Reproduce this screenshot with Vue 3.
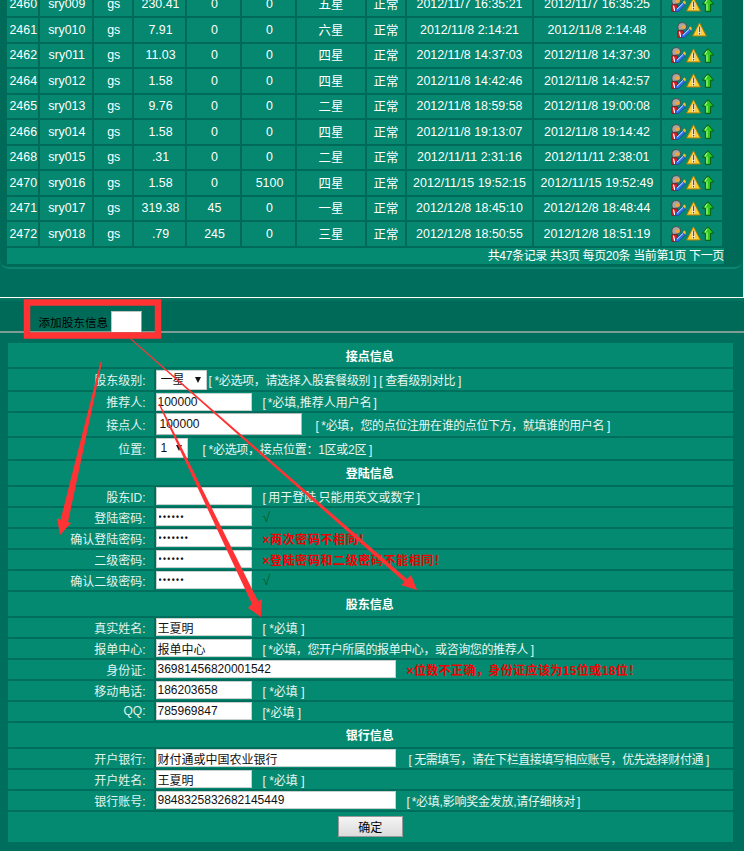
<script setup>
const rows = [
  ['2460','sry009','gs','230.41','0','0','五星','正常','2012/11/7 16:35:21','2012/11/7 16:35:25',true],
  ['2461','sry010','gs','7.91','0','0','六星','正常','2012/11/8 2:14:21','2012/11/8 2:14:48',false],
  ['2462','sry011','gs','11.03','0','0','四星','正常','2012/11/8 14:37:03','2012/11/8 14:37:30',true],
  ['2464','sry012','gs','1.58','0','0','四星','正常','2012/11/8 14:42:46','2012/11/8 14:42:57',true],
  ['2465','sry013','gs','9.76','0','0','二星','正常','2012/11/8 18:59:58','2012/11/8 19:00:08',true],
  ['2466','sry014','gs','1.58','0','0','四星','正常','2012/11/8 19:13:07','2012/11/8 19:14:42',true],
  ['2468','sry015','gs','.31','0','0','二星','正常','2012/11/11 2:31:16','2012/11/11 2:38:01',true],
  ['2470','sry016','gs','1.58','0','5100','四星','正常','2012/11/15 19:52:15','2012/11/15 19:52:49',true],
  ['2471','sry017','gs','319.38','45','0','一星','正常','2012/12/8 18:45:10','2012/12/8 18:48:44',true],
  ['2472','sry018','gs','.79','245','0','三星','正常','2012/12/8 18:50:55','2012/12/8 18:51:19',true],
]
</script>

<template>
  <div class="page">
    <div class="top">
      <div class="panel">
        <div class="table">
          <template v-for="r in rows" :key="r[0]">
            <div v-for="(c, i) in r.slice(0, 10)" :key="i" class="cell" :class="{ nudge: i < 6 }">{{ c }}</div>
            <div class="cell icons">
              <svg class="ic" width="15" height="16" viewBox="0 0 15 16">
                <path d="M.8 5 C.8 2 3 .6 5.4 .6 C7.8 .6 9.4 2 9.4 4.4 C9.4 6.4 8 7.6 6.4 8 L2.4 8.4 C1.4 7.6 .8 6.4 .8 5 Z" fill="#a6a6a6" stroke="#4a4a4a" stroke-width="1"/>
                <path d="M4.4 3.6 H8.6 V6.6 H4.4 Z" fill="#f0a83a"/>
                <path d="M.8 8.8 H6.4 V15.4 H.8 Z" fill="#d8232a" stroke="#7c1015" stroke-width=".7"/>
                <path d="M2.4 9.6 L3.8 15" stroke="#fff" stroke-width="1.2"/>
                <path d="M4.6 13.2 L11.6 6.2 L14.4 8.8 L7.4 15.6 L4.4 15.8 Z" fill="#2f6fe6" stroke="#103a90" stroke-width=".6"/>
                <path d="M6 13.2 L12 7.4" stroke="#dbe8ff" stroke-width="1"/>
                <path d="M11.6 6.2 L13.4 4.4 L14.8 6 L14.4 8.8 Z" fill="#f2c230"/>
              </svg>
              <svg class="ic" width="15" height="15" viewBox="0 0 15 15">
                <path d="M7.5 .8 L14.4 14 H.6 Z" fill="#ffd02a" stroke="#a97c10" stroke-width="1"/>
                <path d="M5.8 5.2 H9.2 L8.8 13 H6.2 Z" fill="#fff3c8"/>
                <rect x="6.9" y="4.8" width="1.3" height="5.4" fill="#7a4a1a"/>
                <rect x="6.9" y="11" width="1.3" height="1.5" fill="#7a4a1a"/>
              </svg>
              <svg v-if="r[10]" class="ic arrow" width="12" height="15" viewBox="0 0 12 15">
                <path d="M6 .6 L11.6 7.2 H8.6 V14.4 H3.4 V7.2 H.4 Z" fill="#2ccb1c" stroke="#0a5a12" stroke-width="1"/>
                <path d="M5 3 L3 6.4 M5 6.5 V13.4" stroke="#b6f59a" stroke-width="1.1"/>
              </svg>
            </div>
          </template>
          <div class="pager">共47条记录 共3页 每页20条 当前第1页 下一页</div>
        </div>
      </div>
    </div>

    <div class="add-bar">
      <span class="add-title">添加股东信息</span>
      <button class="add-btn" type="button"></button>
    </div>

    <div class="form">
      <div class="head">接点信息</div>
      <div class="lab h21">股东级别:</div>
      <div class="val">
        <span class="selwrap sel-w"><select class="sel"><option>一星</option></select></span>
        <span class="note n-rank">[ *必选项&#xFF0C;请选择入股套餐级别 ] [ 查看级别对比 ]</span>
      </div>
      <div class="lab h19">推荐人:</div>
      <div class="val"><input class="inp w96" value="100000"><span class="note n2 tight">[ *必填,推荐人用户名 ]</span></div>
      <div class="lab h22">接点人:</div>
      <div class="val"><input class="inp w146 big" value="100000"><span class="note n-node">[ *必填&#xFF0C;您的点位注册在谁的点位下方&#xFF0C;就填谁的用户名 ]</span></div>
      <div class="lab h21">位置:</div>
      <div class="val">
        <span class="selwrap sel-s"><select class="sel"><option>1</option></select></span>
        <span class="note n-pos">[ *必选项&#xFF0C;接点位置&#xFF1A;1区或2区 ]</span>
      </div>

      <div class="head">登陆信息</div>
      <div class="lab h19">股东ID:</div>
      <div class="val"><input class="inp w96"><span class="note n2 n-id">[ 用于登陆 只能用英文或数字 ]</span></div>
      <div class="lab h19">登陆密码:</div>
      <div class="val"><input class="inp w96 pw" type="password" value="123456"><span class="ok">√</span></div>
      <div class="lab h19">确认登陆密码:</div>
      <div class="val"><input class="inp w96 pw" type="password" value="1234567"><span class="err wide">×两次密码不相同&#xFF01;</span></div>
      <div class="lab h19">二级密码:</div>
      <div class="val"><input class="inp w96 pw" type="password" value="123456"><span class="err wide">×登陆密码和二级密码不能相同&#xFF01;</span></div>
      <div class="lab h19">确认二级密码:</div>
      <div class="val"><input class="inp w96 pw" type="password" value="123456"><span class="ok">√</span></div>

      <div class="head">股东信息</div>
      <div class="lab h19">真实姓名:</div>
      <div class="val"><input class="inp w96" value="王夏明"><span class="note n2">[ *必填 ]</span></div>
      <div class="lab h19">报单中心:</div>
      <div class="val"><input class="inp w96" value="报单中心"><span class="note n2 n-center">[ *必填&#xFF0C;您开户所属的报单中心&#xFF0C;或咨询您的推荐人 ]</span></div>
      <div class="lab h19">身份证:</div>
      <div class="val"><input class="inp w240" value="36981456820001542"><span class="err mid">×位数不正确&#xFF0C;身份证应该为15位或18位&#xFF01;</span></div>
      <div class="lab h19">移动电话:</div>
      <div class="val"><input class="inp w96" value="186203658"><span class="note n2">[ *必填 ]</span></div>
      <div class="lab h19">QQ:</div>
      <div class="val"><input class="inp w96" value="785969847"><span class="note n2">[*必填 ]</span></div>

      <div class="head">银行信息</div>
      <div class="lab h19">开户银行:</div>
      <div class="val"><input class="inp w240" value="财付通或中国农业银行"><span class="note n-bank">[ 无需填写&#xFF0C;请在下栏直接填写相应账号&#xFF0C;优先选择财付通 ]</span></div>
      <div class="lab h19">开户姓名:</div>
      <div class="val"><input class="inp w96" value="王夏明"><span class="note n2">[ *必填 ]</span></div>
      <div class="lab h19">银行账号:</div>
      <div class="val"><input class="inp w240" value="9848325832682145449"><span class="note n-acct">[ *必填,影响奖金发放,请仔细核对 ]</span></div>
      <div class="foot"><button class="ok-btn" type="button">确定</button></div>
    </div>

    <svg class="marks" width="744" height="851" viewBox="0 0 744 851">
      <path d="M100.5 362 L102 362 L68 522 L71 523 L60 535 L57 518 L60.5 520 Z" fill="#ff3333"/>
      <path d="M130 339 L131 338.5 L407 579 L411 575 L417 590 L401 585 L404.5 582 Z" fill="#ff3333"/>
      <path d="M158.5 404 L160 404 L258 601 L262 599 L261 617 L248 608 L252 604 Z" fill="#ff3333"/>
      <rect x="27" y="302.5" width="131" height="33" fill="none" stroke="#ff3333" stroke-width="6.5"/>
    </svg>
  </div>
</template>

<style scoped>
.page {
  position: relative;
  width: 744px;
  height: 851px;
  overflow: hidden;
  background: #006e5c;
  font-family: "Liberation Sans", "Noto Sans CJK SC", sans-serif;
  font-size: 12px;
  color: #fff;
}
.top {
  height: 297.5px;
  box-sizing: border-box;
  border-bottom: 1.5px solid #fff;
  border-right: 1px solid #e8f0ee;
  overflow: hidden;
}
.panel {
  height: 276.5px;
  box-sizing: border-box;
  padding-left: 6.5px;
  border-bottom: 2px solid #0c856e;
  border-radius: 0 0 9px 9px;
  background: #006a58;
}
.table {
  display: grid;
  grid-template-columns: 31.5px 51.5px 38.5px 51px 53px 53px 68px 38px 125px 126px 60px;
  grid-auto-rows: 23.5px;
  column-gap: 2px;
  row-gap: 2px;
  width: 715px;
  margin-top: -7.5px;
}
.cell {
  display: flex;
  align-items: center;
  justify-content: center;
  background: #05886f;
  font-size: 12.4px;
  white-space: nowrap;
}
.nudge {
  padding-left: 2px;
}
.icons {
  font-size: 0;
}
.ic {
  display: block;
  flex: none;
}
.arrow {
  margin-left: 1px;
}
.pager {
  grid-column: 1 / -1;
  height: 16px;
  margin-right: -2px;
  background: #058a72;
  text-align: right;
  font-size: 12px;
  letter-spacing: -.35px;
  line-height: 17px;
  white-space: nowrap;
}
.add-bar {
  box-sizing: border-box;
  height: 35.5px;
  padding: 14px 0 0 38.5px;
  display: flex;
  align-items: flex-start;
  border-bottom: 2px solid #7d9c93;
  background: linear-gradient(#0a7a66, #006a58 4px);
}
.add-title {
  color: #000;
  font-size: 11.6px;
  line-height: 21px;
}
.add-btn {
  box-sizing: border-box;
  width: 31px;
  height: 22px;
  margin: -1px 0 0 2.5px;
  padding: 0;
  background: #fff;
  border: 1px solid #c4c4c4;
  border-right-color: #999;
  border-bottom-color: #999;
}
.form {
  display: grid;
  grid-template-columns: 146px 577.5px;
  column-gap: 2px;
  row-gap: 2px;
  width: 725.5px;
  margin: 10px 0 0 7.5px;
}
.head {
  grid-column: 1 / -1;
  height: 24px;
  padding-right: 1px;
  box-sizing: border-box;
  background: #058a72;
  display: flex;
  align-items: center;
  justify-content: center;
  font-weight: 700;
  font-size: 12px;
}
.lab {
  background: #058a72;
  display: flex;
  align-items: center;
  justify-content: flex-end;
  padding-right: 8px;
  box-sizing: border-box;
  font-size: 12px;
  color: #e2f4ee;
}
.val {
  background: #058a72;
  display: flex;
  align-items: center;
  font-size: 12px;
  color: #e6f6f1;
  white-space: nowrap;
  min-width: 0;
}
.h19 { height: 19px; }
.h21 { height: 21px; }
.h22 { height: 22.5px; }
.inp {
  box-sizing: border-box;
  height: 18px;
  margin: 0;
  padding: 0 0 0 1px;
  background: #fff;
  border: 1px solid #c8d0ce;
  border-radius: 0;
  outline: none;
  color: #111;
  font: 12px "Liberation Sans", "Noto Sans CJK SC", sans-serif;
  flex: none;
}
.pw { font-size: 8.5px; font-weight: 700; letter-spacing: 1.4px; padding-left: 2px; }
.big { height: 22px; padding-left: 3px; border-color: #b0b8b6; }
.w96 { width: 96px; }
.w146 { width: 146px; }
.w240 { width: 240px; }
.selwrap {
  position: relative;
  display: block;
  height: 20px;
  flex: none;
}
.selwrap::after {
  content: "";
  position: absolute;
  top: 7px;
  right: 6px;
  border-left: 3.5px solid transparent;
  border-right: 3.5px solid transparent;
  border-top: 6px solid #111;
}
.sel {
  appearance: none;
  -webkit-appearance: none;
  display: block;
  box-sizing: border-box;
  width: 100%;
  height: 20px;
  padding: 0 0 0 4px;
  margin: 0;
  background: #fff;
  border: 1px solid #c8d0ce;
  border-radius: 0;
  color: #111;
  font: 12px "Liberation Sans", "Noto Sans CJK SC", sans-serif;
}
.sel-w { width: 51px; }
.sel-s { width: 32px; }
.note { display: inline-block; }
.n2 { margin-left: 11px; }
.tight { word-spacing: -1.5px; }
.n-rank { margin-left: 2px; letter-spacing: -.35px; }
.n-node { margin-left: 14px; letter-spacing: -.4px; }
.n-pos { margin-left: 15px; letter-spacing: -.3px; }
.n-id { word-spacing: -1px; }
.n-center { letter-spacing: -.4px; }
.n-bank { margin-left: 13px; letter-spacing: -.45px; }
.n-acct { margin-left: 11px; letter-spacing: -.25px; word-spacing: -1px; }
.ok {
  margin-left: 11px;
  color: #00602c;
  font-size: 14px;
}
.err {
  margin-left: 11px;
  color: #f00000;
  font-weight: 700;
  font-size: 12px;
}
.wide { letter-spacing: .6px; }
.mid { letter-spacing: .4px; }
.foot {
  grid-column: 1 / -1;
  height: 30px;
  background: #058a72;
  display: flex;
  align-items: center;
  justify-content: center;
}
.ok-btn {
  box-sizing: border-box;
  width: 65px;
  height: 21px;
  padding: 0;
  background: linear-gradient(#f4f4f4, #dcdcdc);
  border: 1px solid #999;
  color: #000;
  font: 12px "Liberation Sans", "Noto Sans CJK SC", sans-serif;
}
.marks {
  position: absolute;
  left: 0;
  top: 0;
  pointer-events: none;
}
</style>
